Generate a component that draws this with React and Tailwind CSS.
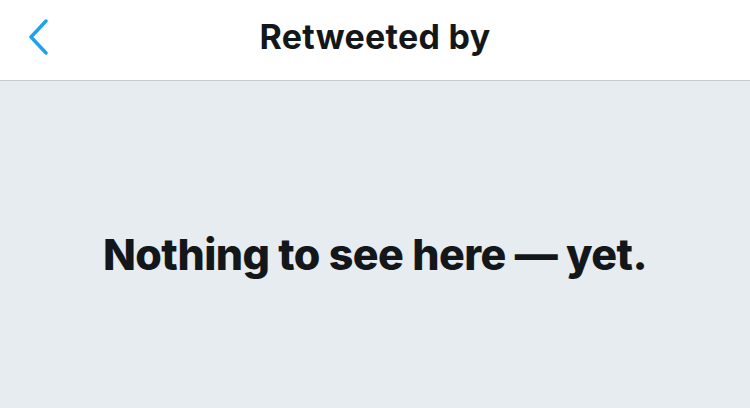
export default function App() {
  return (
    <div className="w-[750px] h-[408px] flex flex-col bg-[#e6ecf0]" style={{ fontFamily: 'Inter, "Liberation Sans", sans-serif' }}>
      <div className="h-[81px] bg-white border-b border-[#c5ccd3] flex items-start relative shrink-0">
        <svg className="absolute left-[26px] top-[19px]" width="24" height="36" viewBox="0 0 24 36" fill="none">
          <path d="M20 2 L5 18 L20 34" stroke="#1da1f2" strokeWidth="3.4" strokeLinecap="round" strokeLinejoin="round" />
        </svg>
        <div className="flex-1 text-center text-[34px] font-bold text-[#14171a] tracking-[0.3px] leading-none pt-[20px]">Retweeted by</div>
      </div>
      <div className="flex-1 flex justify-center pt-[152px]">
        <div className="text-[43px] font-extrabold text-[#14171a] tracking-[-0.55px] leading-none">Nothing to see here — yet.</div>
      </div>
    </div>
  );
}
